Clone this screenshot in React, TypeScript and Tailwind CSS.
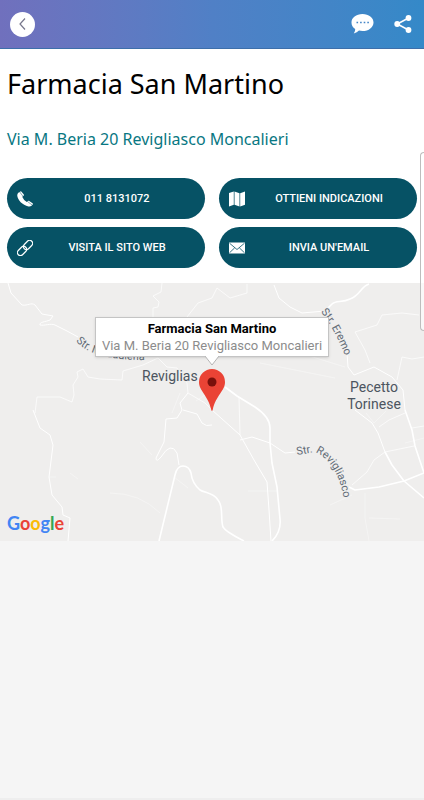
import React from "react";

const roads = {
  wide: [
    "M159 258L175 192Q177 183 183 183Q189 183 191 190Q192 200 200 207C205 210 214 210 218 217C224 224 220 235 223 244Q226 249 244 258",
    "M349 204L355 207L379 204L404 198L424 190",
    "M225 104L237 113L255 124C264 130 270 137 270 145L270 160L272 180L277 204L280 236C281 245 278 252 272 258",
    "M369 1C360 4 361 12 350 16C342 20 336 17 332 21L325 28",
    "M405 127L412 147L415 163L424 190",
    "M385 169L392 182L404 198L424 215",
  ],
  medium: [
    "M8 0L11 10L22 22C28 23 31 19 35 22L42 31L53 33L50 37C45 39 39 39 40 42C45 43 50 40 55 42L67 48L78 54",
    "M240 157L252 154L270 160L285 170L295 169",
    "M347 70L348 84L354 92L374 84L392 94L403 107L405 127",
    "M325 28L302 30L290 24L279 15L274 2",
    "M33 127L40 145L50 152L53 162L49 194L52 212L62 224L63 232L70 235L68 258",
    "M355 127L372 140L378 150L385 169",
    "M183 127L197 131L202 140Q206 144 212 142",
    "M188 110L180 120L182 127L177 135L166 136L164 159L156 175Q156 180 161 174Q171 158 177 170L179 182",
    "M212 127L240 152L254 177L267 199L269 227L271 258",
  ],
  thin: [
    "M162 0L161 9L153 13L159 19L158 24L153 25V34",
    "M212 15L198 20L187 34",
    "M158 75L143 82L123 88L122 97L100 96L88 94L83 86L77 89L78 94L73 102L74 112L72 119L60 114L37 114L35 130",
    "M158 75L167 84L177 85L187 100L188 110L205 120L212 127",
    "M239 114L240 152",
    "M419 32L402 30L382 32L377 42L355 49L365 67L370 80",
    "M397 97L402 74L412 76L424 74",
    "M212 15L217 5L230 15L247 10V1",
    "M352 202L367 189L374 177L385 169L414 163",
    "M379 144L389 137L405 130M412 145L424 143",
  ],
  faint: [
    "M49 194H56M70 190L78 196M140 159L152 172M110 210Q140 210 160 230M248 208H277M365 210V235L369 258M369 235L400 236M330 222L352 212M260 80L335 95M300 70L345 84M180 110L172 130M196 118L212 107M374 140L366 130M374 140L386 128M405 160L424 155M174 194L188 205",
  ],
};

const BackIcon = () => (
  <svg viewBox="0 0 24 24" className="size-3" fill="none" stroke="#77778c" strokeWidth="2.400" aria-hidden="true">
    <path d="M16 1L6 12L16 23" />
  </svg>
);

const ChatIcon = () => (
  <svg viewBox="0 0 23 20" className="h-5 w-[23px]" aria-hidden="true">
    <path d="M11.500 0C17.800 0 22.500 3.600 22.500 8.400S17.800 17 11.500 17Q9.600 17 8 16.600Q6 18.800 2.800 19.400Q4.400 17.200 4.200 15Q.5 12.500 .5 8.400C.5 3.600 5.200 0 11.500 0Z" fill="white" />
    <path d="M5.500 8.500h12.500" stroke="#4385c7" strokeWidth="1.600" strokeDasharray="1.600 2" />
  </svg>
);

const ShareIcon = () => (
  <svg viewBox="0 0 18 18" className="size-[18px]" aria-hidden="true">
    <path d="M14.500 3L3.300 9L14.500 15" fill="none" stroke="white" strokeWidth="1.600" />
    <g fill="white"><circle cx="14.500" cy="3" r="2.900" /><circle cx="3.200" cy="9" r="2.900" /><circle cx="14.500" cy="15" r="2.900" /></g>
  </svg>
);

const PhoneIcon = () => (
  <svg viewBox="0 0 16 16" className="size-4" fill="white" aria-hidden="true">
    <path d="M3.400.5Q4 0 4.500.7L6.800 3.600Q7.200 4.200 6.600 4.700L5.200 5.800Q6.300 8.800 9.800 11L11 10.100Q11.600 9.600 12.200 10L15.500 12.300Q16.200 12.800 15.700 13.500Q14.200 16 11.500 15.500C5.500 14.200 .5 9 .2 4Q.2 1.800 3.400.5Z" />
    <path d="M2.600.8L5.900 5.200M10.500 10.500L15.100 14" stroke="#065265" strokeWidth=".5" />
  </svg>
);

const MapIcon = () => (
  <svg viewBox="0 0 16 16" className="size-4" fill="white" aria-hidden="true">
    <path d="M0 2L4.800.6V13.800L0 15.400ZM5.500.6L10.500 2.200V15.400L5.500 13.800ZM11.200 2.200L16 .6V13.800L11.200 15.400Z" />
  </svg>
);

const LinkIcon = () => (
  <svg viewBox="0 0 16 16" className="size-4" fill="none" stroke="white" strokeWidth="1.200" aria-hidden="true">
    <g transform="rotate(-45 8 8)">
      <rect x="-1.500" y="5" width="10.500" height="6" rx="3" />
      <rect x="7" y="5" width="10.500" height="6" rx="3" />
    </g>
  </svg>
);

const MailIcon = () => (
  <svg viewBox="0 0 16 16" className="size-4" aria-hidden="true">
    <path d="M0 2.500H16V13.500H0Z" fill="white" />
    <path d="M.5 3.200L8 9.500L15.500 3.200M.5 12.800L5.700 7.800M15.500 12.800L10.300 7.800" fill="none" stroke="#065265" strokeWidth=".8" />
  </svg>
);

const actions = [
  { label: "011 8131072", Icon: PhoneIcon },
  { label: "OTTIENI INDICAZIONI", Icon: MapIcon },
  { label: "VISITA IL SITO WEB", Icon: LinkIcon },
  { label: "INVIA UN'EMAIL", Icon: MailIcon },
];

function RoadMap() {
  return (
    <svg viewBox="0 0 424 258" preserveAspectRatio="xMidYMid slice" className="block h-full w-full font-[Roboto,sans-serif]" role="img" aria-label="Mappa di Revigliasco">
      <g fill="none" stroke="white" strokeLinejoin="round">
        {roads.faint.map((d) => <path key={d} d={d} strokeWidth="1" opacity=".35" />)}
        {roads.thin.map((d) => <path key={d} d={d} strokeWidth="1" opacity=".7" />)}
        {roads.medium.map((d) => <path key={d} d={d} strokeWidth="1" />)}
        {roads.wide.map((d) => <path key={d} d={d} strokeWidth="1.600" />)}
      </g>
      <defs>
        <path id="maddalena" d="M76 58Q92 78 150 77" />
        <path id="eremo" d="M321 29Q333 42 350 84" />
        <path id="revigliasco" d="M297 172L315 169C328 174 341 192 344 218" />
      </defs>
      <g fill="#626b76" fontSize="11" stroke="#efeeed" strokeWidth="2" paintOrder="stroke">
        <text><textPath href="#maddalena">Str. Maddalena</textPath></text>
        <text><textPath href="#eremo">Str. Eremo</textPath></text>
        <text><textPath href="#revigliasco">Str. Revigliasco</textPath></text>
      </g>
      <g fill="#4c5560" fontSize="14" stroke="#efeeed" strokeWidth="2" paintOrder="stroke">
        <text x="142" y="98">Reviglias</text>
        <text x="374" y="109" textAnchor="middle">Pecetto</text>
        <text x="374" y="126" textAnchor="middle">Torinese</text>
      </g>
    </svg>
  );
}

export default function App() {
  return (
    <div className="relative flex min-h-screen flex-col border-b-2 border-[#eeeeee] bg-[#f5f5f5] font-[Roboto,sans-serif]">
      <header className="flex h-[49px] items-center border-b border-[#3d6faa] bg-linear-to-r from-[#7070bd] via-[#5080c6] to-[#3489c8] pr-3 pl-[10px]">
        <button aria-label="Indietro" className="flex size-[25px] items-center justify-center rounded-full bg-white"><BackIcon /></button>
        <button aria-label="Commenti" className="ml-auto"><ChatIcon /></button>
        <button aria-label="Condividi" className="ml-5"><ShareIcon /></button>
      </header>

      <section className="bg-white px-[7px] pt-[15px] pb-[15px] font-['Noto_Sans',sans-serif]">
        <h1 className="text-[27px] leading-10 text-black">Farmacia San Martino</h1>
        <p className="mt-[23px] text-base leading-6 text-[#087782]">Via M. Beria 20 Revigliasco Moncalieri</p>
        <div className="mt-[27px] grid grid-cols-2 gap-x-[14px] gap-y-2 font-[Roboto,sans-serif]">
          {actions.map(({ label, Icon }) => (
            <button key={label} className="flex h-[41px] items-center rounded-full bg-[#065265] pr-1 pl-[10px] text-white">
              <Icon />
              <span className="flex-1 text-center text-[11px] leading-4 font-medium">{label}</span>
            </button>
          ))}
        </div>
      </section>

      <section className="relative h-[258px] overflow-hidden bg-[#efeeed]">
        <RoadMap />
        <svg viewBox="0 0 26 42" className="absolute top-[86px] left-1/2 h-[42px] w-[26px] -translate-x-1/2" aria-hidden="true">
          <path d="M13 0A13 13 0 0 0 0 13C0 22 9 26 12.300 41Q13 43 13.700 41C17 26 26 22 26 13A13 13 0 0 0 13 0Z" fill="#ea4335" />
          <circle cx="13" cy="13" r="4.500" fill="#7a100b" />
        </svg>
        <div className="absolute top-[34px] left-1/2 w-[234px] -translate-x-1/2 border border-[#c4c4c4] bg-white pt-[2px] pb-[2px] text-center text-[13px] leading-[17px] whitespace-nowrap shadow-sm">
          <h2 className="font-bold text-black">Farmacia San Martino</h2>
          <p className="text-[#8c8c8c]">Via M. Beria 20 Revigliasco Moncalieri</p>
          <svg viewBox="0 0 14 10" className="absolute top-full left-1/2 h-[10px] w-[14px] -translate-x-1/2" aria-hidden="true">
            <path d="M0 0L7 9L14 0" fill="white" stroke="#b5b5b5" />
          </svg>
        </div>
        <div className="absolute bottom-[6px] left-[7px] font-[Lato,sans-serif] text-[18px] leading-6 font-bold" aria-label="Google">
          <span className="text-[#4285f4]">G</span><span className="text-[#ea4335]">o</span><span className="text-[#fbbc05]">o</span><span className="text-[#4285f4]">g</span><span className="text-[#34a853]">l</span><span className="text-[#ea4335]">e</span>
        </div>
      </section>
      <aside className="absolute top-[152px] right-0 h-[179px] w-1 rounded-l-md border border-r-0 border-[#bdbdbd] bg-white/60" />
    </div>
  );
}
